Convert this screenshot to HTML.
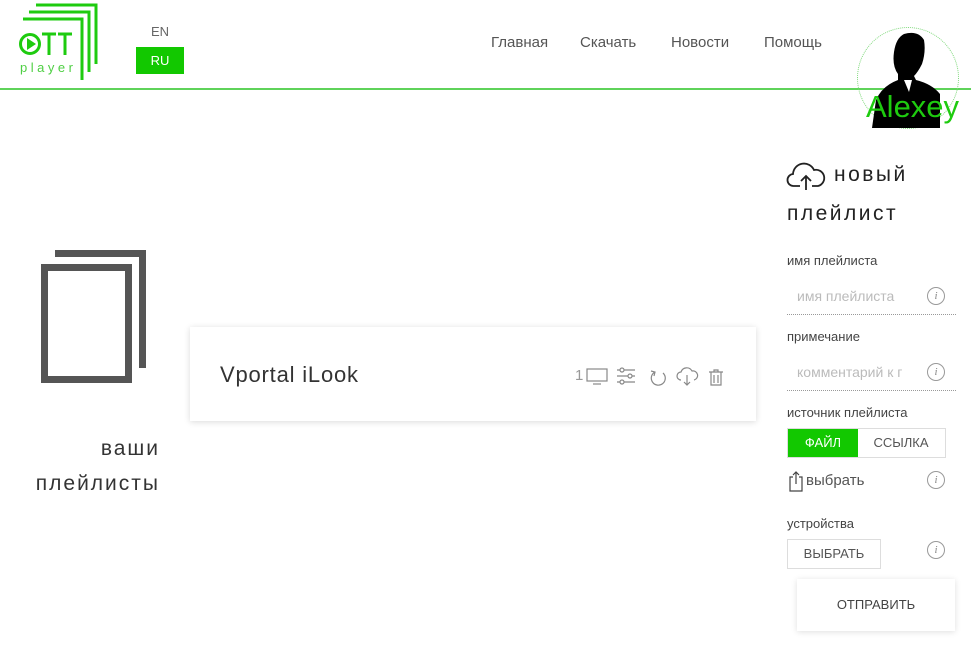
<!DOCTYPE html>
<html><head><meta charset="utf-8"><style>
body{margin:0;width:971px;height:652px;background:#fff;font-family:"Liberation Sans",sans-serif;position:relative;overflow:hidden;color:#333}
.a{position:absolute}
.nav{font-size:15px;color:#555;top:34px}
.lbl{font-size:13px;color:#444}
.info{width:16px;height:16px;border:1px solid #999;border-radius:50%;font:italic 11px "Liberation Serif",serif;color:#888;text-align:center;line-height:16px}
</style></head><body>
<svg class="a" style="left:0;top:0" width="110" height="85">
<g fill="none" stroke="#1ecb0f" stroke-width="3">
<polyline points="36,5 96,5 96,64"/>
<polyline points="29,12 89,12 89,72"/>
<polyline points="23,19 82,19 82,80"/>
<circle cx="30" cy="44" r="9.5"/>
</g>
<polygon points="27,38 36,44 27,50" fill="#1ecb0f"/>
<path d="M42,34h14M49,34v21M58,34h14M65,34v21" stroke="#1ecb0f" stroke-width="3"/>
<text x="20" y="72" font-size="13" fill="#4fcf44" letter-spacing="3.5" font-family="Liberation Sans">player</text>
</svg>
<div class="a" style="left:151px;top:24px;font-size:13px;color:#666">EN</div>
<div class="a" style="left:136px;top:47px;width:48px;height:27px;background:#12c800;color:#fff;font-size:13px;text-align:center;line-height:27px">RU</div>
<div class="a nav" style="left:491px">Главная</div>
<div class="a nav" style="left:580px">Скачать</div>
<div class="a nav" style="left:671px">Новости</div>
<div class="a nav" style="left:764px">Помощь</div>
<div class="a" style="left:0;top:88px;width:971px;height:2px;background:#5fd35a"></div>
<div class="a" style="left:857px;top:27px;width:100px;height:100px;border:1px dotted #7ed87a;border-radius:50%"></div>
<svg class="a" style="left:860px;top:30px" width="90" height="98">
<path d="M44,4 Q58,0 64,10 Q66,22 62,34 Q58,42 54,46 L56,50 Q72,54 80,64 L80,98 L12,98 L16,70 Q22,56 38,50 L38,44 Q32,36 34,22 Q36,8 44,4 Z" fill="#000"/>
<path d="M44,50 L52,50 L49,62 Z" fill="#fff"/>
</svg>
<div class="a" style="left:866px;top:89px;font-size:31px;color:#1ecb0f">Alexey</div>
<div class="a" style="left:41px;top:264px;width:77px;height:105px;border:7px solid #555"></div>
<div class="a" style="left:55px;top:250px;width:91px;height:7px;background:#555"></div>
<div class="a" style="left:139px;top:250px;width:7px;height:118px;background:#555"></div>
<div class="a" style="left:20px;top:431px;width:140px;text-align:right;font-size:21px;line-height:35px;color:#333;letter-spacing:2px">ваши<br>плейлисты</div>
<div class="a" style="left:190px;top:327px;width:566px;height:94px;box-shadow:0 1px 6px rgba(0,0,0,.15);background:#fff"></div>
<div class="a" style="left:220px;top:362px;font-size:22px;color:#333;letter-spacing:0.8px">Vportal iLook</div>
<div class="a" style="left:575px;top:367px;font-size:15px;color:#999">1</div>
<svg class="a" style="left:585px;top:365px" width="145" height="24" fill="none" stroke="#888" stroke-width="1.2">
<rect x="2" y="4" width="20" height="12"/><path d="M8,19h8"/>
<path d="M32,5h18M32,11h18M32,17h18"/><circle cx="37" cy="5" r="2" fill="#fff"/><circle cx="45" cy="11" r="2" fill="#fff"/><circle cx="37" cy="17" r="2" fill="#fff"/>
<path d="M78,8 A7,7 0 1 1 70,7 M66,6 l4,1 -1,4"/>
<path d="M96,15 a4,4 0 0 1 0,-8 a6,6 0 0 1 11,-1 a4,4 0 0 1 2,9 M102,10v10 M99,17l3,3 3,-3"/>
<path d="M124,7h14M129,7v-2h4v2M126,7v13h10v-13M129,10v8M133,10v8"/>
</svg>
<svg class="a" style="left:786px;top:160px" width="42" height="34" fill="none" stroke="#222" stroke-width="1.8">
<path d="M14,26 H8 a6,6 0 0 1 -1,-12 a11,11 0 0 1 21,-4 a8,8 0 0 1 4,16 h-6 M20,30 V16 M15,21 l5,-5 5,5"/>
</svg>
<div class="a" style="left:834px;top:163px;font-size:21px;color:#222;letter-spacing:2.5px">новый</div>
<div class="a" style="left:787px;top:202px;font-size:21px;color:#222;letter-spacing:2.5px">плейлист</div>
<div class="a lbl" style="left:787px;top:253px">имя плейлиста</div>
<div class="a" style="left:797px;top:288px;font-size:14px;color:#bbb">имя плейлиста</div>
<div class="a info" style="left:927px;top:287px">i</div>
<div class="a" style="left:787px;top:314px;width:169px;border-top:1px dotted #999"></div>
<div class="a lbl" style="left:787px;top:329px">примечание</div>
<div class="a" style="left:797px;top:364px;font-size:14px;color:#bbb;width:124px;overflow:hidden;white-space:nowrap">комментарий к г</div>
<div class="a info" style="left:927px;top:363px">i</div>
<div class="a" style="left:787px;top:390px;width:169px;border-top:1px dotted #999"></div>
<div class="a lbl" style="left:787px;top:405px">источник плейлиста</div>
<div class="a" style="left:787px;top:428px;width:157px;height:28px;border:1px solid #ddd"></div>
<div class="a" style="left:788px;top:429px;width:70px;height:28px;background:#12c800;color:#fff;font-size:13px;text-align:center;line-height:28px">ФАЙЛ</div>
<div class="a" style="left:858px;top:429px;width:86px;font-size:13px;color:#555;text-align:center;line-height:28px">ССЫЛКА</div>
<svg class="a" style="left:788px;top:470px" width="18" height="22" fill="none" stroke="#444" stroke-width="1.2"><path d="M5,7H2V21H14V7H11M8,14V2M5,5l3,-3 3,3"/></svg>
<div class="a" style="left:806px;top:472px;font-size:15px;color:#555">выбрать</div>
<div class="a info" style="left:927px;top:471px">i</div>
<div class="a lbl" style="left:787px;top:516px">устройства</div>
<div class="a" style="left:787px;top:539px;width:92px;height:28px;border:1px solid #ddd;font-size:13px;color:#555;text-align:center;line-height:28px">ВЫБРАТЬ</div>
<div class="a info" style="left:927px;top:541px">i</div>
<div class="a" style="left:797px;top:579px;width:158px;height:52px;box-shadow:0 1px 6px rgba(0,0,0,.13);background:#fff;font-size:13px;color:#444;text-align:center;line-height:52px">ОТПРАВИТЬ</div>
</body></html>
